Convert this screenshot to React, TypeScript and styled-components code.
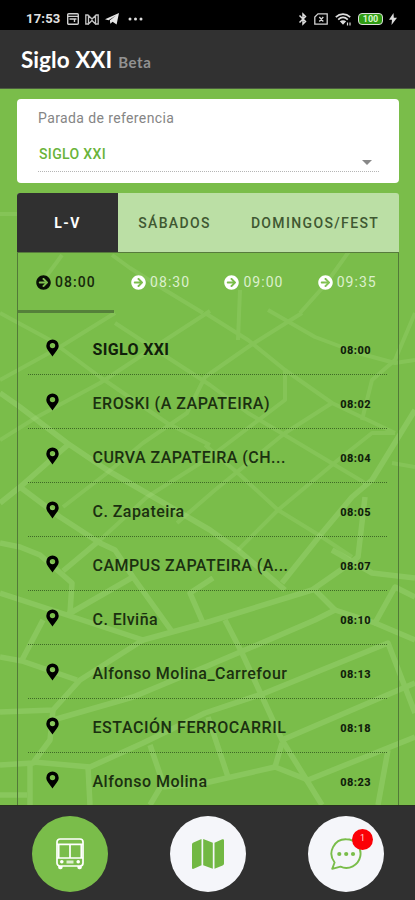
import React from 'react';
import styled, { createGlobalStyle, css } from 'styled-components';
import { FaArrowCircleRight } from 'react-icons/fa';

const GlobalStyle = createGlobalStyle`
  * { box-sizing: border-box; }
  html, body { margin: 0; padding: 0; }
  body { font-family: Roboto, "Liberation Sans", sans-serif; overflow: hidden; }
`;

const Screen = styled.div`
  width: 415px;
  height: 900px;
  display: flex;
  flex-direction: column;
  overflow: hidden;
  background: #7abd4a;
`;

const StatusBar = styled.header`
  height: 30px;
  flex: none;
  display: flex;
  align-items: center;
  justify-content: space-between;
  padding: 8px 18px 0 26px;
  background: #000;
  color: #e2e2e2;
`;

const StatusGroup = styled.div<{ $gap: number }>`
  display: flex;
  align-items: center;
  gap: ${(p) => p.$gap}px;
  svg { display: block; }
`;

const Clock = styled.span`
  font: 700 13px/16px Roboto, sans-serif;
  letter-spacing: 0.2px;
  width: 35px;
  white-space: nowrap;
`;

const AppBar = styled.div`
  height: 59px;
  flex: none;
  display: flex;
  align-items: baseline;
  gap: 6px;
  padding: 15px 21px 0;
  background: #313131;
  border-bottom: 1px solid #4d5e40;
`;

const Title = styled.h1`
  margin: 0;
  font: 700 22.5px/30px Lato, sans-serif;
  letter-spacing: 0.05px;
  color: #fff;
  white-space: nowrap;
`;

const Beta = styled.span`
  font: 700 15px/20px Lato, sans-serif;
  letter-spacing: 0.6px;
  color: #929292;
`;

const Content = styled.main`
  height: 716px;
  flex: none;
  display: grid;
  overflow: hidden;
`;

const Streets = styled.svg`
  grid-area: 1 / 1;
  display: block;
`;

const Column = styled.div`
  grid-area: 1 / 1;
  z-index: 1;
  display: flex;
  flex-direction: column;
  padding: 10px 16px 0 17px;
`;

const StopCard = styled.section`
  height: 84px;
  flex: none;
  padding: 10px 20px 0 21px;
  border-radius: 4px;
  background: #fff;
`;

const StopLabel = styled.div`
  font-size: 14px;
  line-height: 18px;
  letter-spacing: 0.39px;
  color: #858585;
`;

const StopSelect = styled.div`
  height: 36px;
  margin-top: 9px;
  display: flex;
  justify-content: space-between;
  padding: 9px 7px 0 1px;
  border-bottom: 1px dotted #b5b5b5;
  font-weight: 500;
  font-size: 14px;
  line-height: 18px;
  letter-spacing: 0.35px;
  color: #69b33a;
`;

const Caret = styled.span`
  margin-top: 15px;
  width: 0;
  height: 0;
  border: 5px solid transparent;
  border-top-color: #888;
  border-bottom: 0;
`;

const Tabs = styled.nav`
  height: 60px;
  flex: none;
  margin-top: 10px;
  display: flex;
  overflow: hidden;
  border-radius: 3px 3px 0 0;
  background: #bbdfa5;
  border-bottom: 1px solid #577b3c;
`;

const Tab = styled.button<{ $active?: boolean; $width: number }>`
  width: ${(p) => p.$width}px;
  border: 0;
  padding: 0;
  font: 500 14px/20px Roboto, sans-serif;
  letter-spacing: 1.35px;
  white-space: nowrap;
  background: ${(p) => (p.$active ? '#303030' : 'transparent')};
  color: ${(p) => (p.$active ? '#fff' : '#3f5832')};
  ${(p) => p.$active && css`font-weight: 700;`}
`;

const Panel = styled.section`
  height: 560px;
  flex: none;
  border: solid #527a38;
  border-width: 0 1px;
`;

const Departures = styled.div`
  height: 60px;
  display: flex;
`;

const Departure = styled.div<{ $active?: boolean }>`
  width: ${(p) => (p.$active ? 96 : 93.3)}px;
  flex: none;
  display: flex;
  align-items: center;
  justify-content: center;
  gap: 4px;
  padding-top: 1px;
  border-bottom: ${(p) => (p.$active ? '3px solid #55803a' : '3px solid transparent')};
  color: ${(p) => (p.$active ? '#090f05' : '#fff')};
  font-weight: ${(p) => (p.$active ? 500 : 400)};
  font-size: 14px;
  letter-spacing: 1.05px;
`;

const DepartureTime = styled.span<{ $active?: boolean }>`
  color: ${(p) => (p.$active ? '#17290b' : '#dcf0cd')};
`;

const StopList = styled.ul`
  list-style: none;
  margin: 0;
  padding: 8px 11px 0 10px;
`;

const StopRow = styled.li`
  height: 54px;
  display: flex;
  align-items: center;
  border-bottom: 1px dotted #3f6a26;
  padding: 3px 16px 0 18px;
`;

const PinCell = styled.span`
  width: 46.5px;
  flex: none;
  height: 20px;
  svg { display: block; }
`;

const StopName = styled.span<{ $bold?: boolean; $spacing: number }>`
  flex: 1;
  font-size: 16px;
  font-weight: ${(p) => (p.$bold ? 700 : 500)};
  letter-spacing: ${(p) => p.$spacing}px;
  color: ${(p) => (p.$bold ? '#10200a' : '#1b3010')};
  white-space: nowrap;
`;

const StopTime = styled.span`
  padding-top: 3px;
  font-size: 11px;
  font-weight: 800;
  letter-spacing: 0.45px;
  color: #10200a;
`;

const BottomBar = styled.footer`
  height: 95px;
  flex: none;
  display: flex;
  justify-content: space-between;
  padding: 10px 31px 0 32px;
  background: #303030;
  border-top: 1px solid #29321f;
`;

const RoundButton = styled.button<{ $active?: boolean }>`
  position: relative;
  width: 76px;
  height: 76px;
  padding: 0;
  border: 0;
  border-radius: 50%;
  display: grid;
  place-items: center;
  background: ${(p) => (p.$active ? '#7abd4a' : '#f5f6fa')};
  svg { display: block; }
`;

const Badge = styled.span`
  position: absolute;
  left: 44px;
  top: 13px;
  width: 21px;
  height: 21px;
  border-radius: 50%;
  background: #fb0006;
  color: #ffd7d7;
  font: 400 9px/19px Roboto, sans-serif;
  text-align: center;
`;

const minorStreets = [
  '0,313 50,340 100,377 167,423 210,445',
  '0,380 60,347 115,313',
  '0,440 37,417 100,383 150,350 210,311',
  '115,323 167,357 210,385 248,413 365,483',
  '63,507 107,473 143,443 187,413 205,377 248,347 302,313',
  '100,540 147,497 210,457 285,400 285,370',
  '205,313 248,340 285,370 332,403 395,433',
  '240,290 238,340',
  '268,310 315,337 358,353 395,363 415,360',
  '350,250 325,285 300,313',
  '415,313 395,360 372,380 362,420',
  '205,445 240,475 278,510 322,537 352,557',
  '177,523 215,490 285,433 332,403',
  '238,550 278,510 338,460 372,433 395,433',
  '392,463 415,467',
  '112,255 130,268 165,290 203,313',
  '40,285 62,255',
  '0,214 17,214',
];

const majorStreets = [
  '0,393 20,407 67,443 107,470 150,495 210,530 238,550 285,590',
  '0,503 20,487 70,443',
  '20,487 60,517 100,543 115,550 133,577 173,633',
  '0,543 20,547 40,555 72,583 70,613',
  '63,571 100,540',
  '415,410 372,480 352,497 322,533 282,583',
  '365,497 358,557 345,567 312,590 205,623 143,640 67,615 0,593',
  '67,615 133,577',
  '43,620 22,660',
  '0,657 22,661 77,680',
  '143,640 80,680 53,710 0,712',
  '53,720 133,697 205,667 238,653 315,620 335,610 315,590',
  '53,710 50,740 33,763 0,765',
  '33,762 90,767 143,743 205,713 265,693 388,643 415,713',
  '30,763 30,805',
  '88,767 90,805',
  '0,795 27,795',
  '150,745 163,783 150,805',
  '163,787 205,783 275,767 308,780 415,737',
  '213,578 190,593 203,623',
  '225,620 242,653 282,740 322,805',
  '282,740 415,683',
  '282,743 275,767',
  '208,717 228,777',
  '388,750 378,805',
  '335,610 375,623 395,587 415,597',
  '375,623 415,640',
  '332,550 372,573 415,578',
];

const stops = [
  { name: 'SIGLO XXI', time: '08:00', bold: true, spacing: 0.35 },
  { name: 'EROSKI (A ZAPATEIRA)', time: '08:02', spacing: 0.52 },
  { name: 'CURVA ZAPATEIRA (CH...', time: '08:04', spacing: 0.48 },
  { name: 'C. Zapateira', time: '08:05', spacing: 0.45 },
  { name: 'CAMPUS ZAPATEIRA (A...', time: '08:07', spacing: 0.46 },
  { name: 'C. Elviña', time: '08:10', spacing: 0.45 },
  { name: 'Alfonso Molina_Carrefour', time: '08:13', spacing: 0.47 },
  { name: 'ESTACIÓN FERROCARRIL', time: '08:18', spacing: 0.55 },
  { name: 'Alfonso Molina', time: '08:23', spacing: 0.48 },
];

const StreetMap = () => (
  <Streets width="415" height="716" viewBox="0 89 415 716" fill="none" stroke="#a8dc82" strokeLinejoin="round">
    <g strokeWidth="4" opacity="0.24">
      {minorStreets.map((points) => <polyline key={points} points={points} />)}
    </g>
    <g strokeWidth="5.5" opacity="0.34">
      {majorStreets.map((points) => <polyline key={points} points={points} />)}
    </g>
  </Streets>
);

const PinIcon = () => (
  <svg width="13" height="18" viewBox="0 0 13 18" fill="#000" fillRule="evenodd">
    <path d="M6.5.5A6.2 6.2 0 0 0 .3 6.7c0 3.5 2.9 5.6 6.2 10.8 3.3-5.2 6.2-7.3 6.2-10.8A6.2 6.2 0 0 0 6.5.5zm0 3.4a2.7 2.7 0 1 1 0 5.4 2.7 2.7 0 0 1 0-5.4z" />
  </svg>
);

const CalendarIcon = () => (
  <svg width="12" height="12" viewBox="0 0 12 12" fill="none" stroke="#cfcfcf" strokeWidth="1.4">
    <rect x="0.7" y="0.7" width="10.6" height="10.6" rx="1" />
    <path d="M1 3.4h10M2.5 6h7M7.5 6v3" />
  </svg>
);

const MailIcon = () => (
  <svg width="14" height="11" viewBox="0 0 14 11" fill="none" stroke="#c4c4c4" strokeWidth="1.3">
    <path d="M3.5 10H.8V1h2.1L7 5l4.1-4h2.1v9h-2.7M3.5 1v9L7 6.5l3.5 3.5V1" />
  </svg>
);

const PlaneIcon = () => (
  <svg width="14" height="12" viewBox="0 0 14 12" fill="#e6e6e6">
    <path d="M0 6.3 14 0l-2.4 11.5-4-2.8-2.3 2.1-.4-3.5L11 2.5 3.6 7.3z" />
  </svg>
);

const BluetoothIcon = () => (
  <svg width="10" height="14" viewBox="0 0 10 14" fill="none" stroke="#ddd" strokeWidth="1.5">
    <path d="m1.5 3.5 6 6L5 12V2l2.5 2.5-6 6" />
  </svg>
);

const SimIcon = () => (
  <svg width="15" height="12" viewBox="0 0 15 12" fill="none" stroke="#d2d2d2" strokeWidth="1.3">
    <path d="M4 .8h9.2v10.4H.8V4zM5.3 4l4 4.5M9.3 4l-4 4.5" />
  </svg>
);

const WifiIcon = () => (
  <svg width="17" height="13" viewBox="0 0 17 13" fill="none" stroke="#ddd" strokeWidth="1.7">
    <path d="M.8 4.2c4.2-4 10.2-4 14.4 0M3.2 6.6c2.9-2.6 6.7-2.6 9.6 0" />
    <path d="m4.8 8.3 3.2 3.5 3.2-3.5q-3.2-2-6.4 0z" fill="#ddd" stroke="none" />
    <path d="M12.5 9.5v3M15 9.5v3" strokeWidth="1.2" />
  </svg>
);

const BatteryShell = styled.span`
  display: block;
  width: 25px;
  height: 12px;
  border: 1.5px solid #ddd;
  border-radius: 4px;
  background: #2f9b13;
  color: #d9f5cd;
  font: 700 9px/10px Roboto, sans-serif;
  text-align: center;
`;

const Bolt = () => (
  <svg width="8" height="12" viewBox="0 0 8 12" fill="#ddd"><path d="M4.5 0 0 6.8h3L2.5 12 8 4.8H4.8z" /></svg>
);

const BusIcon = () => (
  <svg width="28" height="32" viewBox="0 0 28 32" fill="none" stroke="#fff" strokeWidth="1.7">
    <rect x="1" y="1" width="26" height="27" rx="3" />
    <path d="M1 6.3h26M2.7 6.3v13.2M25.3 6.3v13.2M14 6.3v13.2M1 20h26" />
    <circle cx="5.8" cy="23.8" r="1.8" fill="#fff" stroke="none" />
    <circle cx="22.2" cy="23.8" r="1.8" fill="#fff" stroke="none" />
    <path d="M10.5 24h7" strokeWidth="3" opacity="0.75" />
    <path d="M2.2 28v1.5q0 1.7 1.8 1.7h.8q1.8 0 1.8-1.7V28M21.4 28v1.5q0 1.7 1.8 1.7h.8q1.8 0 1.8-1.7V28" fill="#fff" stroke="none" />
  </svg>
);

const MapIcon = () => (
  <svg width="32" height="32" viewBox="0 0 32 32" fill="#72b843">
    <path d="M0 6.5Q0 5 1.5 4.4L9.5 1v26.3L1.7 30.8Q0 31.4 0 29.7zM11.2 1l9.6 3.8v26L11.2 27.3zM22.5 4.8l7.8-3.5Q32 .7 32 2.4v23.2q0 1.4-1.4 2l-8.1 3.2z" />
  </svg>
);

const ChatIcon = () => (
  <svg width="32" height="32" viewBox="0 0 32 32" fill="none" stroke="#7abd4a" strokeWidth="1.9">
    <path d="M16.3 1.3a14.3 14.3 0 1 1-5.8 27.4L2.2 30.8l2.4-6.3A14.3 14.3 0 0 1 16.3 1.3z" strokeLinejoin="round" />
    <g fill="#7abd4a" stroke="none">
      <circle cx="9.3" cy="16" r="2.1" /><circle cx="16.2" cy="16" r="2.1" /><circle cx="23" cy="16" r="2.1" />
    </g>
  </svg>
);

const departures = ['08:00', '08:30', '09:00', '09:35'];

export default function App() {
  return (
    <Screen>
      <GlobalStyle />
      <StatusBar>
        <StatusGroup $gap={6}>
          <Clock>17:53</Clock>
          <CalendarIcon />
          <MailIcon />
          <PlaneIcon />
          <svg width="22" height="4" viewBox="0 0 22 4" fill="#ddd">
            <circle cx="5" cy="2" r="1.5" /><circle cx="10.5" cy="2" r="1.5" /><circle cx="16" cy="2" r="1.5" />
          </svg>
        </StatusGroup>
        <StatusGroup $gap={6}>
          <BluetoothIcon />
          <SimIcon />
          <WifiIcon />
          <BatteryShell>100</BatteryShell>
          <Bolt />
        </StatusGroup>
      </StatusBar>
      <AppBar>
        <Title>Siglo XXI</Title>
        <Beta>Beta</Beta>
      </AppBar>
      <Content>
        <StreetMap />
        <Column>
          <StopCard>
            <StopLabel>Parada de referencia</StopLabel>
            <StopSelect>SIGLO XXI<Caret /></StopSelect>
          </StopCard>
          <Tabs>
            <Tab $active $width={101}>L-V</Tab>
            <Tab $width={113}>SÁBADOS</Tab>
            <Tab $width={168}>DOMINGOS/FEST</Tab>
          </Tabs>
          <Panel>
            <Departures>
              {departures.map((time, i) => (
                <Departure key={time} $active={i === 0}>
                  <FaArrowCircleRight size={15} />
                  <DepartureTime $active={i === 0}>{time}</DepartureTime>
                </Departure>
              ))}
            </Departures>
            <StopList>
              {stops.map((stop) => (
                <StopRow key={stop.time}>
                  <PinCell><PinIcon /></PinCell>
                  <StopName $bold={stop.bold} $spacing={stop.spacing}>{stop.name}</StopName>
                  <StopTime>{stop.time}</StopTime>
                </StopRow>
              ))}
            </StopList>
          </Panel>
        </Column>
      </Content>
      <BottomBar>
        <RoundButton $active aria-label="Autobuses"><BusIcon /></RoundButton>
        <RoundButton aria-label="Mapa"><MapIcon /></RoundButton>
        <RoundButton aria-label="Mensajes"><ChatIcon /><Badge>1</Badge></RoundButton>
      </BottomBar>
    </Screen>
  );
}
